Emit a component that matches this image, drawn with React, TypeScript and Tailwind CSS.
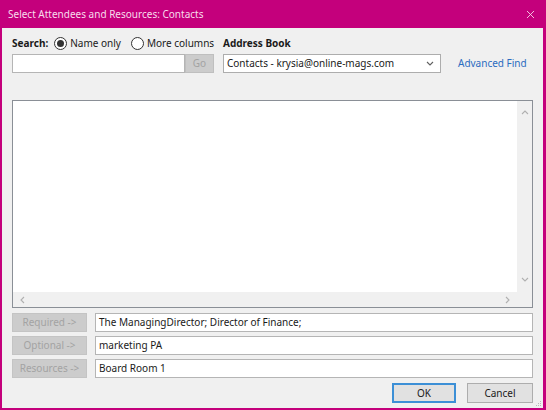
import { X } from "lucide-react"

const font = { fontFamily: '"Noto Sans", "Open Sans", sans-serif' }

function Radio({ checked }: { checked?: boolean }) {
  return (
    <span className="flex h-[13px] w-[13px] shrink-0 items-center justify-center rounded-full border border-[#333333] bg-white">
      {checked && <span className="h-[7px] w-[7px] rounded-full bg-[#333333]" />}
    </span>
  )
}

function Chevron({ dir, className }: { dir: "up" | "down" | "left" | "right"; className?: string }) {
  const d = {
    up: "M1 5 L4 2 L7 5",
    down: "M1 2 L4 5 L7 2",
    left: "M5 1 L2 4 L5 7",
    right: "M2 1 L5 4 L2 7",
  }[dir]
  return (
    <svg width="8" height="8" viewBox="0 0 8 8" className={className}>
      <path d={d} fill="none" stroke="currentColor" strokeWidth="1.1" />
    </svg>
  )
}

const recipients = [
  { label: "Required ->", value: "The ManagingDirector; Director of Finance;" },
  { label: "Optional ->", value: "marketing PA" },
  { label: "Resources ->", value: "Board Room 1" },
]

export default function App() {
  return (
    <div
      className="flex h-[410px] w-[546px] flex-col whitespace-nowrap bg-[#c4007c] text-[10px] text-[#1a1a1a]"
      style={font}
    >
      {/* Title bar */}
      <div className="flex h-[28px] shrink-0 items-center justify-between pl-[8px] pr-[9px] text-[#f8dcec]">
        <span className="text-[10px]">Select Attendees and Resources: Contacts</span>
        <X className="h-[13px] w-[13px]" strokeWidth={1.6} />
      </div>

      <div className="relative mb-[2px] ml-[2px] mr-[3px] flex flex-1 flex-col bg-[#f0f0f0] px-[10px]">
        {/* Search + address book */}
        <div className="mt-[7px] flex gap-[9px]">
          <div className="flex w-[202px] flex-col">
            <div className="flex h-[16px] items-center">
              <span className="font-bold">Search:</span>
              <span className="ml-[6px] flex items-center gap-[3px]">
                <Radio checked />
                <span>Name only</span>
              </span>
              <span className="ml-[10px] flex items-center gap-[3px]">
                <Radio />
                <span>More columns</span>
              </span>
            </div>
            <div className="mt-[3px] flex h-[19px]">
              <div className="flex-1 border border-[#b5b5b5] bg-white" />
              <div className="flex w-[29px] items-center justify-center border border-[#bfbfbf] bg-[#cccccc] text-[#a3a3a3]">
                Go
              </div>
            </div>
          </div>
          <div className="flex flex-1 flex-col">
            <div className="flex h-[16px] items-center font-bold">Address Book</div>
            <div className="mt-[3px] flex h-[19px] items-center">
              <div className="flex h-full w-[218px] items-center justify-between border border-[#adadad] bg-white pl-[3px] pr-[6px]">
                <span>Contacts - krysia@online-mags.com</span>
                <Chevron dir="down" className="text-[#606060]" />
              </div>
              <span className="ml-[17px] text-[#2b6cc0]">Advanced Find</span>
            </div>
          </div>
        </div>

        {/* Results list */}
        <div className="mt-[27px] flex h-[208px] flex-col border border-[#8a8f96] bg-white">
          <div className="flex flex-1">
            <div className="flex-1" />
            <div className="flex w-[15px] flex-col items-center justify-between bg-[#f0f0f0] py-[8px] text-[#b0b0b0]">
              <Chevron dir="up" />
              <Chevron dir="down" />
            </div>
          </div>
          <div className="flex h-[15px] items-center justify-between bg-[#f0f0f0] pl-[6px] pr-[20px] text-[#b0b0b0]">
            <Chevron dir="left" />
            <Chevron dir="right" />
          </div>
        </div>

        {/* Recipients */}
        <div className="mt-[5px] flex flex-col gap-[4px]">
          {recipients.map((r) => (
            <div key={r.label} className="flex h-[19px] gap-[8px]">
              <div className="flex w-[75px] items-center justify-center border border-[#c4c4c4] bg-[#cccccc] text-[#a3a3a3]">
                {r.label}
              </div>
              <div className="flex flex-1 items-center border border-[#b5b5b5] bg-white pl-[3px]">{r.value}</div>
            </div>
          ))}
        </div>

        {/* Buttons */}
        <div className="mt-[5px] flex justify-end gap-[11px]">
          <div className="flex h-[20px] w-[64px] items-center justify-center border-2 border-[#3c8fd6] bg-[#e1e1e1]">OK</div>
          <div className="flex h-[20px] w-[66px] items-center justify-center border border-[#adadad] bg-[#e1e1e1]">
            Cancel
          </div>
        </div>

        {/* Size grip */}
        <svg width="6" height="6" viewBox="0 0 6 6" className="absolute bottom-[1px] right-[1px] text-[#b8b8b8]">
          <rect x="4" y="0" width="1" height="1" fill="currentColor" />
          <rect x="2" y="2" width="1" height="1" fill="currentColor" />
          <rect x="4" y="2" width="1" height="1" fill="currentColor" />
          <rect x="0" y="4" width="1" height="1" fill="currentColor" />
          <rect x="2" y="4" width="1" height="1" fill="currentColor" />
          <rect x="4" y="4" width="1" height="1" fill="currentColor" />
        </svg>
      </div>
    </div>
  )
}
